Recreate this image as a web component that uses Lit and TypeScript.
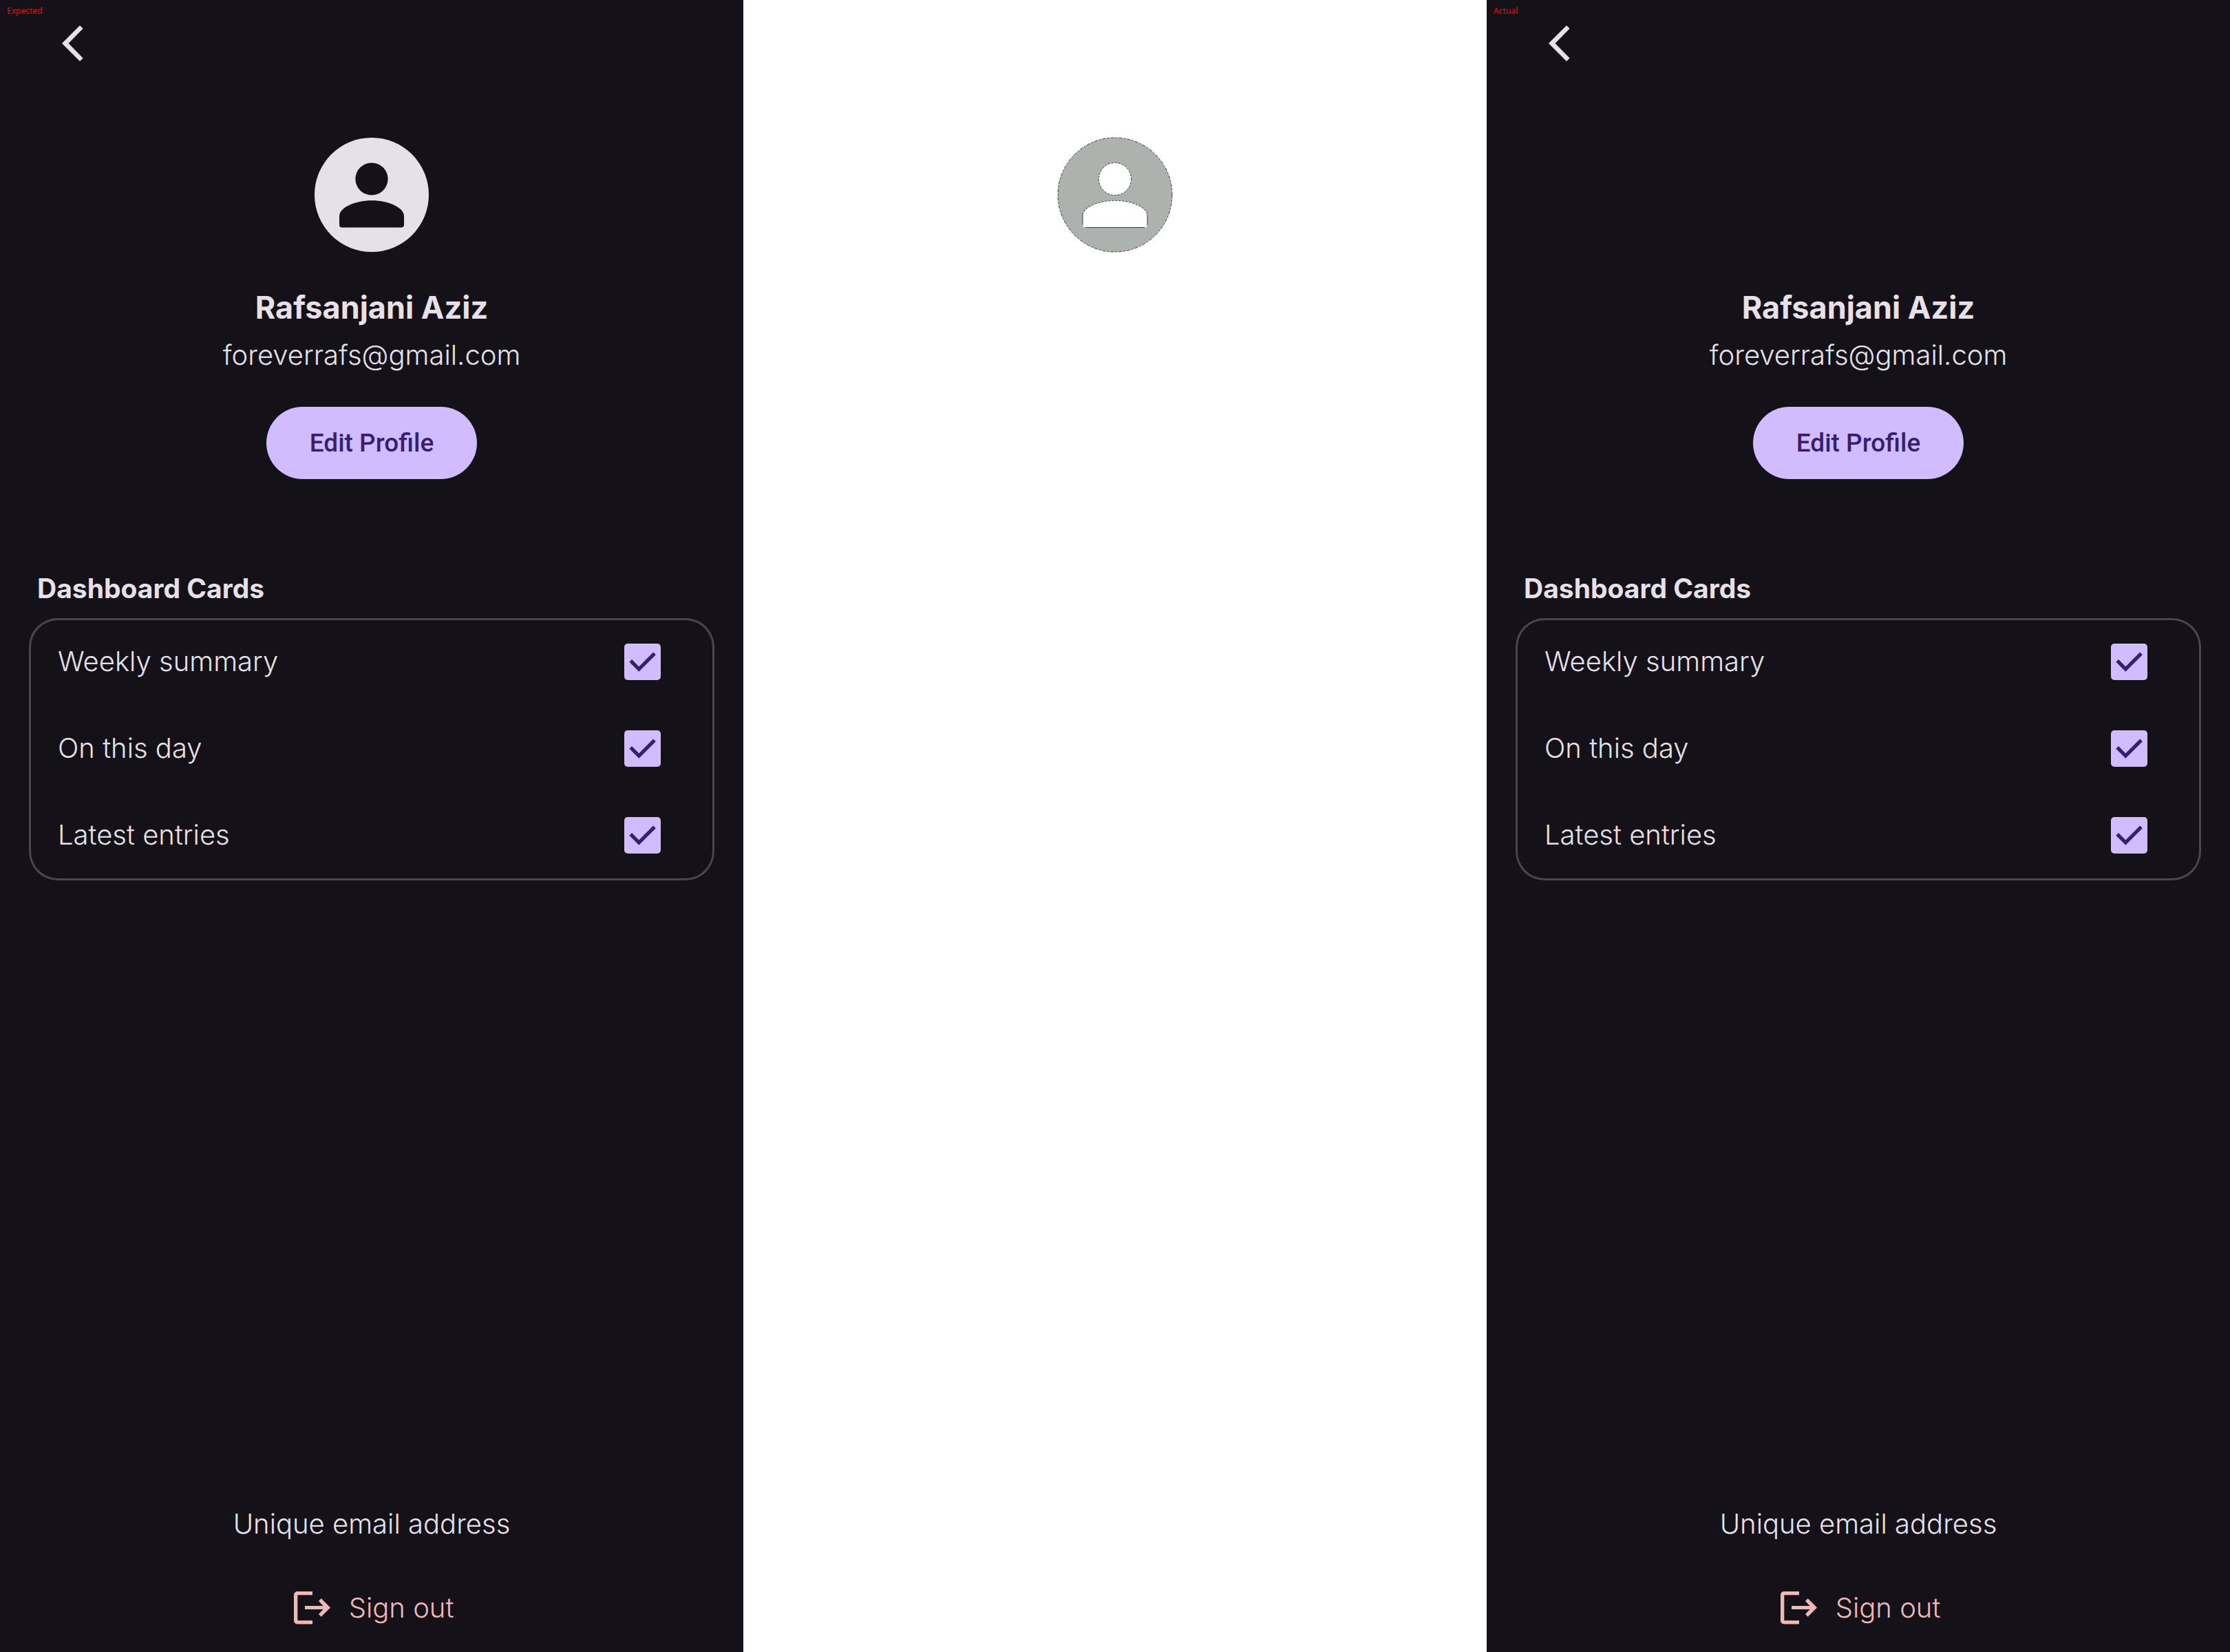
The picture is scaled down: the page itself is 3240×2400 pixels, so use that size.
import { LitElement, html, css, nothing } from "lit";
import { customElement, property } from "lit/decorators.js";

const BODY =
  "M36 114C36 102 58 91.3 83 91.3S130 102 130 114V126.5a4 4 0 0 1-4 4H40a4 4 0 0 1-4-4Z";

const CARDS = ["Weekly summary", "On this day", "Latest entries"];

@customElement("profile-screen")
export class ProfileScreen extends LitElement {
  @property() label = "";
  @property({ type: Boolean, attribute: "with-avatar" }) withAvatar = false;

  static styles = css`
    :host {
      display: block;
      min-width: 0;
    }
    .screen {
      position: relative;
      box-sizing: border-box;
      min-height: 100vh;
      display: flex;
      flex-direction: column;
      padding: 0 42px 30px;
      background: #141218;
      color: #e6e1e9;
      font: 300 40px/48px Inter, sans-serif;
    }
    .label {
      position: absolute;
      top: 8px;
      left: 10px;
      font: 400 12px/16px "Noto Sans", sans-serif;
      color: #f00;
    }
    button {
      border: 0;
      padding: 0;
      background: none;
      color: inherit;
      font: inherit;
      cursor: pointer;
    }
    svg {
      display: block;
      flex: none;
    }
    .bar {
      height: 126px;
      display: flex;
      align-items: center;
    }
    .back {
      width: 128px;
      height: 126px;
      display: flex;
      align-items: center;
      justify-content: center;
    }
    .profile {
      display: flex;
      flex-direction: column;
      align-items: center;
      padding-top: 74px;
    }
    .avatar {
      width: 166px;
      height: 166px;
    }
    .name {
      margin: 54px 0 0;
      font-size: 45px;
      line-height: 54px;
      font-weight: 700;
    }
    .email {
      margin: 18px 0 0;
    }
    .edit {
      margin-top: 51px;
      height: 105px;
      padding: 0 63px;
      border-radius: 53px;
      background: #d0bcff;
      color: #381e72;
      font: 500 37px/48px Roboto, sans-serif;
    }
    .title {
      margin: 134px 12px 18px;
      font-size: 39px;
      line-height: 50px;
      font-weight: 700;
    }
    .cards {
      margin: 0;
      padding: 0 78px 3px 42px;
      list-style: none;
      border-radius: 42px;
      box-shadow: inset 0 0 0 3px #49464d;
    }
    .card {
      height: 126px;
      display: flex;
      align-items: center;
      justify-content: space-between;
    }
    .box {
      display: grid;
      width: 53px;
      height: 53px;
    }
    .box > * {
      grid-area: 1 / 1;
    }
    .check {
      appearance: none;
      width: 53px;
      height: 53px;
      margin: 0;
      border-radius: 5px;
      background: #49464d;
    }
    .check:checked {
      background: #d0bcff;
    }
    .tick {
      pointer-events: none;
      visibility: hidden;
    }
    .check:checked + .tick {
      visibility: visible;
    }
    .footer {
      margin-top: auto;
      display: flex;
      flex-direction: column;
      align-items: center;
      gap: 64px;
    }
    .note {
      margin: 0;
    }
    .signout {
      display: flex;
      align-items: center;
      gap: 26px;
      height: 68px;
      padding-left: 6px;
      color: #f2b8b5;
    }
  `;

  render() {
    return html`
      <main class="screen">
        <span class="label">${this.label}</span>
        <header class="bar">
          <button class="back" aria-label="Back">
            <svg width="32" height="54" viewBox="0 0 32 54">
              <path d="M26 1L30.6 5.6 9.6 27 30.6 48.4 26 53 0 27Z" fill="currentColor" />
            </svg>
          </button>
        </header>
        <section class="profile">
          <div class="avatar">
            ${this.withAvatar
              ? html`<svg width="166" height="166" viewBox="0 0 166 166">
                  <circle cx="83" cy="83" r="83" fill="#e6e1e9" />
                  <circle cx="83" cy="60" r="23.6" fill="#141218" />
                  <path d=${BODY} fill="#141218" />
                </svg>`
              : nothing}
          </div>
          <h1 class="name">Rafsanjani Aziz</h1>
          <p class="email">foreverrafs@gmail.com</p>
          <button class="edit">Edit Profile</button>
        </section>
        <h2 class="title">Dashboard Cards</h2>
        <ul class="cards">
          ${CARDS.map(
            (name, i) => html`<li class="card">
              <label for="card-${i}">${name}</label>
              <span class="box">
                <input class="check" id="card-${i}" type="checkbox" checked />
                <svg class="tick" width="53" height="53" viewBox="0 0 53 53">
                  <path d="M9.2 24.8L21.3 37 44 14.3" fill="none" stroke="#381e72" stroke-width="5.2" />
                </svg>
              </span>
            </li>`
          )}
        </ul>
        <footer class="footer">
          <p class="note">Unique email address</p>
          <button class="signout">
            <svg width="54" height="48" viewBox="0 0 54 48" fill="currentColor">
              <path d="M27 0H5a5 5 0 0 0-5 5V42.5a5 5 0 0 0 5 5H27V42.2H5.3V5.3H27Z" />
              <path d="M39.7 10.3L53 23.5 39.7 36.7 36 33 42.6 26.1H16V20.9H42.6L36 14Z" />
            </svg>
            Sign out
          </button>
        </footer>
      </main>
    `;
  }
}

@customElement("diff-view")
export class DiffView extends LitElement {
  static styles = css`
    :host {
      display: block;
      min-width: 0;
    }
    .view {
      display: flex;
      justify-content: center;
      padding-top: 200px;
    }
  `;

  render() {
    return html`<div class="view">
      <svg width="166" height="166" viewBox="0 0 166 166" stroke="#3c3e3c" overflow="visible">
        <circle cx="83" cy="83" r="83" fill="#adb2ae" stroke-dasharray="5 2 3 2" />
        <circle cx="83" cy="60" r="23.6" fill="#fff" stroke-dasharray="3 2" />
        <path d=${BODY} fill="#fff" stroke="none" />
        <path d="M36 112C36 102 58 91.3 83 91.3S130 102 130 112" fill="none" stroke-dasharray="3 2" />
        <path d="M36 112V127M130 112V127M40 130.5H126" fill="none" />
      </svg>
    </div>`;
  }
}

@customElement("app-root")
export class AppRoot extends LitElement {
  static styles = css`
    :host {
      display: block;
      background: #fff;
    }
    .compare {
      display: grid;
      grid-template-columns: repeat(3, minmax(0, 1fr));
      min-height: 100vh;
    }
  `;

  render() {
    return html`<div class="compare">
      <profile-screen label="Expected" with-avatar></profile-screen>
      <diff-view></diff-view>
      <profile-screen label="Actual"></profile-screen>
    </div>`;
  }
}
